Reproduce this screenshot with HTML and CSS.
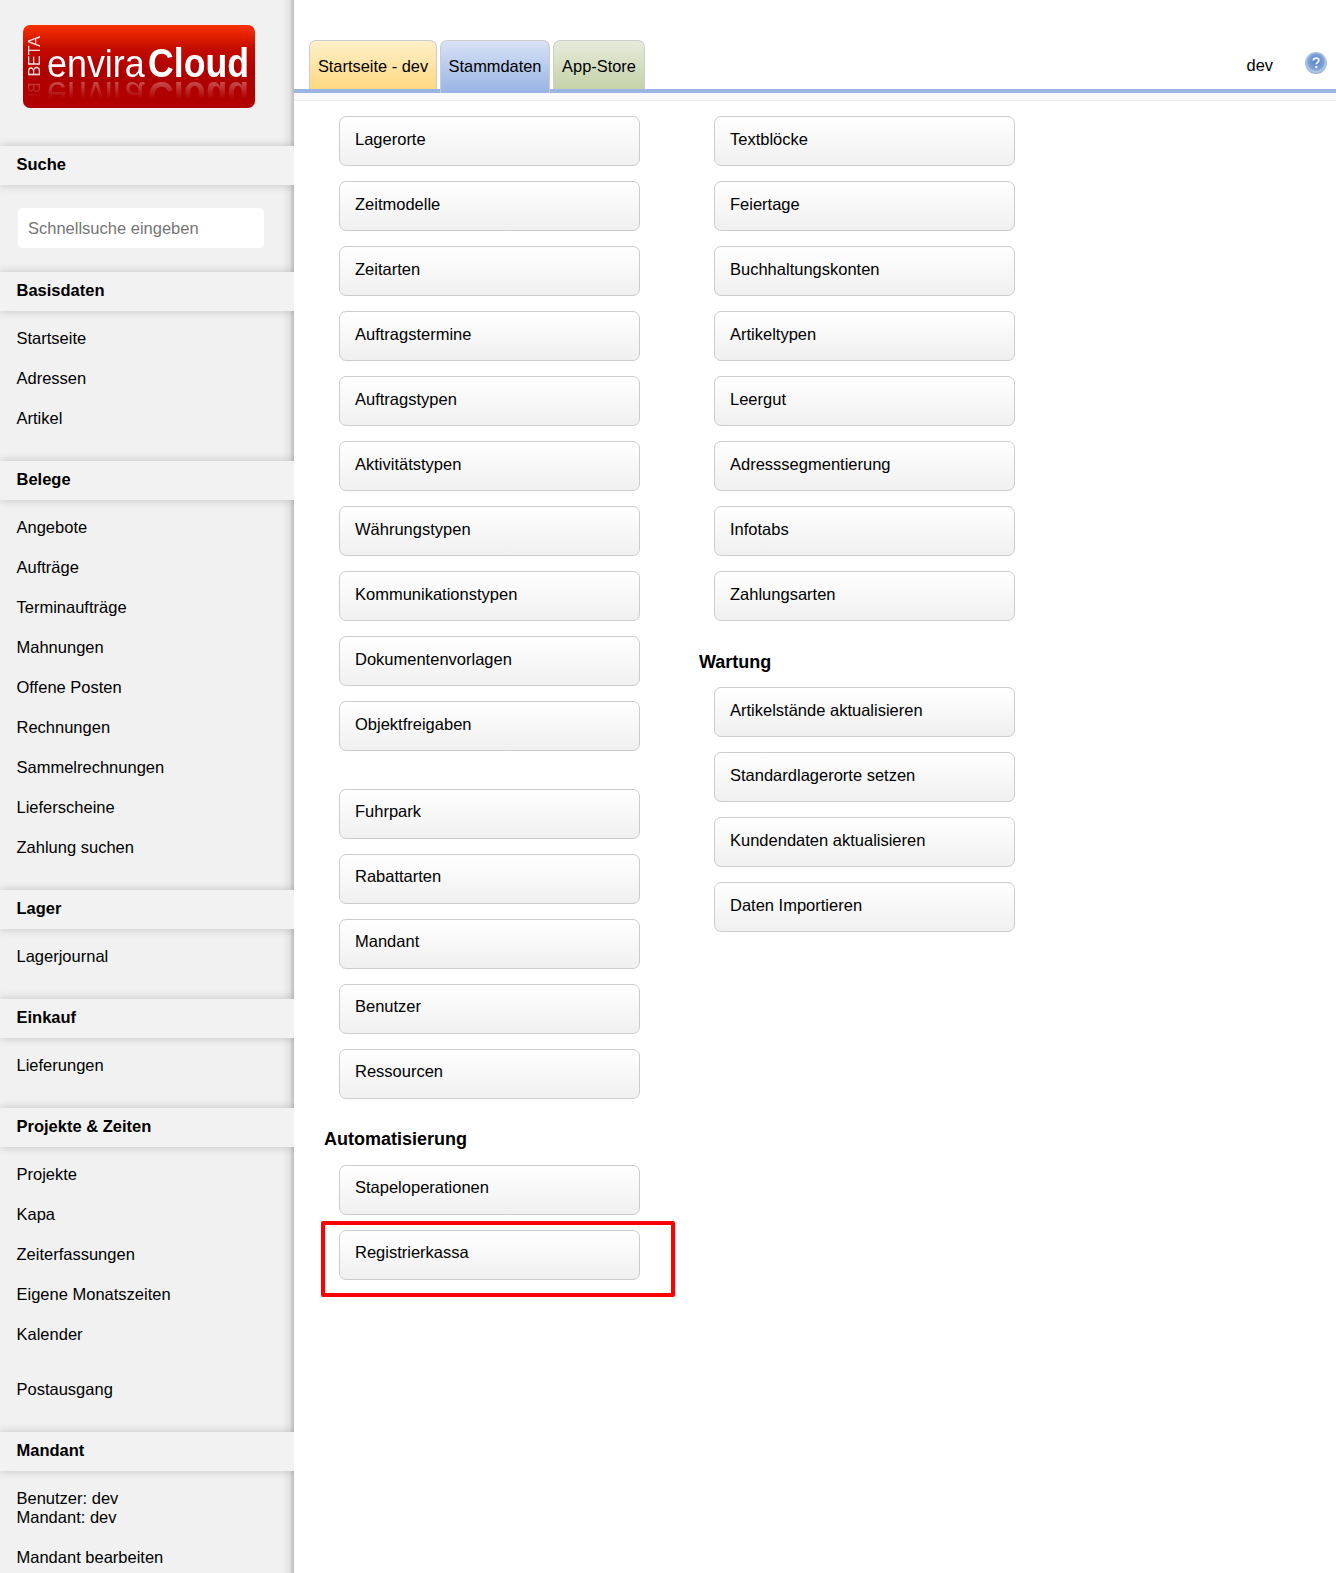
FILE: index.html
```html
<!DOCTYPE html>
<html lang="de">
<head>
    <meta charset="UTF-8">
    <meta name="viewport" content="width=device-width, initial-scale=1.0">
    <title>enviraCloud - Stammdaten</title>
    <link rel="stylesheet" href="styles.css">
</head>
<body>

    <div class="page">
        <aside class="sidebar">
            <div class="logo-area">
                <div class="logo">
                    <div class="logo-row">
                        <span class="logo-beta">BETA</span>
                        <span class="logo-envira">envira</span>
                        <span class="logo-cloud">Cloud</span>
                    </div>
                </div>
            </div>

            <h2 class="side-title">Suche</h2>
            <div class="search-box">
                <input type="text" class="search-input" placeholder="Schnellsuche eingeben">
            </div>

            <h2 class="side-title">Basisdaten</h2>
            <ul class="side-list">
                <li>Startseite</li>
                <li>Adressen</li>
                <li>Artikel</li>
            </ul>

            <h2 class="side-title">Belege</h2>
            <ul class="side-list">
                <li>Angebote</li>
                <li>Aufträge</li>
                <li>Terminaufträge</li>
                <li>Mahnungen</li>
                <li>Offene Posten</li>
                <li>Rechnungen</li>
                <li>Sammelrechnungen</li>
                <li>Lieferscheine</li>
                <li>Zahlung suchen</li>
            </ul>

            <h2 class="side-title">Lager</h2>
            <ul class="side-list">
                <li>Lagerjournal</li>
            </ul>

            <h2 class="side-title">Einkauf</h2>
            <ul class="side-list">
                <li>Lieferungen</li>
            </ul>

            <h2 class="side-title">Projekte &amp; Zeiten</h2>
            <ul class="side-list">
                <li>Projekte</li>
                <li>Kapa</li>
                <li>Zeiterfassungen</li>
                <li>Eigene Monatszeiten</li>
                <li>Kalender</li>
                <li class="side-gap">Postausgang</li>
            </ul>

            <h2 class="side-title">Mandant</h2>
            <ul class="side-list">
                <li class="side-info">Benutzer: dev<br>Mandant: dev</li>
                <li>Mandant bearbeiten</li>
            </ul>
        </aside>

        <main class="content">
            <header class="topbar">
                <nav class="tabs">
                    <a class="tab tab-home">Startseite - dev</a>
                    <a class="tab tab-master">Stammdaten</a>
                    <a class="tab tab-store">App-Store</a>
                </nav>
                <span class="user-name">dev</span>
                <svg class="help-icon" width="24" height="24" viewBox="0 0 24 24">
                    <defs>
                        <radialGradient id="helpFill" cx="50%" cy="45%" r="55%">
                            <stop offset="0%" stop-color="#5f88c8"/>
                            <stop offset="62%" stop-color="#7b9fd6"/>
                            <stop offset="82%" stop-color="#b4c9e8"/>
                            <stop offset="100%" stop-color="#8eaad6"/>
                        </radialGradient>
                    </defs>
                    <circle cx="12" cy="12" r="11" fill="url(#helpFill)"/>
                    <path d="M9.300 9.500c.2-1.500 1.300-2.300 2.800-2.300 1.600 0 2.700.9 2.700 2.200 0 1.200-.7 1.700-1.400 2.200-.7.500-1.100.9-1.100 1.700" fill="none" stroke="#eef3fb" stroke-width="1.800"/>
                    <circle cx="12.300" cy="16" r="1.200" fill="#eef3fb"/>
                </svg>
            </header>

            <div class="columns">
                <section class="column">
                    <a class="tile">Lagerorte</a>
                    <a class="tile">Zeitmodelle</a>
                    <a class="tile">Zeitarten</a>
                    <a class="tile">Auftragstermine</a>
                    <a class="tile">Auftragstypen</a>
                    <a class="tile">Aktivitätstypen</a>
                    <a class="tile">Währungstypen</a>
                    <a class="tile">Kommunikationstypen</a>
                    <a class="tile">Dokumentenvorlagen</a>
                    <a class="tile">Objektfreigaben</a>
                    <div class="spacer"></div>
                    <a class="tile tile-high">Fuhrpark</a>
                    <a class="tile tile-high">Rabattarten</a>
                    <a class="tile tile-high">Mandant</a>
                    <a class="tile tile-high">Benutzer</a>
                    <a class="tile tile-high">Ressourcen</a>
                    <h3 class="group-title">Automatisierung</h3>
                    <a class="tile tile-high">Stapeloperationen</a>
                    <div class="marked">
                        <a class="tile tile-high">Registrierkassa</a>
                        <div class="marker"></div>
                    </div>
                </section>

                <section class="column">
                    <a class="tile">Textblöcke</a>
                    <a class="tile">Feiertage</a>
                    <a class="tile">Buchhaltungskonten</a>
                    <a class="tile">Artikeltypen</a>
                    <a class="tile">Leergut</a>
                    <a class="tile">Adresssegmentierung</a>
                    <a class="tile">Infotabs</a>
                    <a class="tile">Zahlungsarten</a>
                    <h3 class="group-title group-title-low">Wartung</h3>
                    <a class="tile">Artikelstände aktualisieren</a>
                    <a class="tile">Standardlagerorte setzen</a>
                    <a class="tile">Kundendaten aktualisieren</a>
                    <a class="tile">Daten Importieren</a>
                </section>
            </div>
        </main>
    </div>

</body>
</html>
```

FILE: styles.css
```css
* {
    box-sizing: border-box;
}
html, body {
    margin: 0;
    padding: 0;
}
body {
    font-family: "Liberation Sans", Arial, sans-serif;
    font-size: 16.5px;
    color: #000;
    background-color: #fff;
}
.page {
    display: flex;
    height: 1573px;
    overflow: hidden;
}

/* Sidebar */
.sidebar {
    position: relative;
    flex: 0 0 294px;
    background-color: #f1f1f1;
    overflow: hidden;
}
.sidebar::after {
    content: "";
    position: absolute;
    top: 0;
    right: 0;
    bottom: 0;
    width: 12px;
    background: linear-gradient(to right, rgba(0, 0, 0, 0), rgba(0, 0, 0, 0.05) 60%, rgba(0, 0, 0, 0.22));
}
.logo-area {
    height: 146px;
    padding: 25px 0 0 23px;
}
.logo {
    width: 232px;
    height: 83px;
    padding-top: 11px;
    border-radius: 7px;
    overflow: hidden;
    color: #fff;
    background: linear-gradient(to bottom, #fa3200 0%, #c40c00 28%, #ae0000 55%, #b20000 100%);
}
.logo-row {
    display: flex;
    align-items: flex-end;
    height: 41px;
    padding-left: 5px;
    white-space: nowrap;
    -webkit-box-reflect: below 5px linear-gradient(to bottom, transparent 60%, rgba(255, 255, 255, 0.3) 100%);
}
.logo-beta {
    writing-mode: vertical-rl;
    transform: rotate(180deg);
    width: 14px;
    margin-right: 5px;
    font-size: 16px;
    line-height: 14px;
    opacity: 0.85;
}
.logo-envira {
    display: inline-block;
    width: 101px;
    font-size: 39px;
    line-height: 27px;
    transform: scaleX(0.92);
    transform-origin: left;
}
.logo-cloud {
    display: inline-block;
    font-size: 41.500px;
    line-height: 28px;
    font-weight: bold;
    transform: scaleX(0.86);
    transform-origin: left;
}
.side-title {
    position: relative;
    z-index: 1;
    height: 39px;
    margin: 0;
    padding-left: 16.500px;
    font-size: 16.500px;
    line-height: 37px;
    font-weight: bold;
    background-color: #f2f2f2;
    box-shadow: 0 0 9px rgba(0, 0, 0, 0.2);
}
.search-box {
    padding: 23px 30px 24px 18px;
}
.search-input {
    display: block;
    width: 100%;
    height: 40px;
    padding: 0 10px;
    border: none;
    border-radius: 5px;
    font-family: inherit;
    font-size: 16.500px;
    background-color: #fff;
}
.search-input::placeholder {
    color: #757575;
    opacity: 1;
}
.side-list {
    margin: 0;
    padding: 7px 0 23px 16.500px;
    list-style: none;
}
.side-list li {
    height: 40px;
    line-height: 40px;
}
.side-list .side-gap {
    margin-top: 15px;
}
.side-list .side-info {
    height: 59px;
    padding-top: 11px;
    line-height: 19px;
}

/* Top bar */
.content {
    flex: 1;
    min-width: 0;
}
.topbar {
    display: flex;
    height: 101px;
    padding: 40px 0 0 15px;
    background-color: #fff;
    background-image: linear-gradient(to bottom, #9ab4e4, #9ab4e4);
    background-repeat: no-repeat;
    background-size: 100% 4px;
    background-position: 0 89px;
    border-bottom: 1px solid #eee;
    box-shadow: inset 0 -7px 0 #f9f9f9;
}
.tabs {
    display: flex;
    gap: 3px;
}
.tab {
    display: block;
    height: 49px;
    border: 1px solid #ccc;
    border-bottom: none;
    border-radius: 7px 7px 0 0;
    font-size: 16.400px;
    line-height: 50px;
    text-align: center;
    white-space: nowrap;
}
.tab-home {
    width: 128px;
    background: linear-gradient(to bottom, #fff0c9, #ffd982);
}
.tab-master {
    width: 110px;
    height: 53px;
    background: linear-gradient(to bottom, #d8e2f6, #98b3e4);
}
.tab-store {
    width: 92px;
    background: linear-gradient(to bottom, #e6ebdb, #c5d2a9);
}
.user-name {
    margin-left: auto;
    font-size: 16.400px;
    line-height: 51px;
}
.help-icon {
    margin: 11px 8px 0 31px;
}

/* Main tiles */
.columns {
    display: flex;
    padding: 15px 0 0 30px;
}
.column {
    flex: 0 0 375px;
}
.tile {
    display: block;
    width: 301px;
    height: 50px;
    margin: 0 0 15px 15px;
    padding-left: 15px;
    border: 1px solid #ccc;
    border-radius: 7px;
    line-height: 44px;
    background: linear-gradient(to bottom, #fff, #f0f0f0);
}
.tile-high {
    line-height: 42px;
}
.spacer {
    height: 23px;
}
.group-title {
    height: 51px;
    margin: 0;
    padding-top: 14px;
    font-size: 18px;
    line-height: 22px;
    font-weight: bold;
}
.group-title-low {
    padding-top: 15px;
}
.marked {
    position: relative;
}
.marker {
    position: absolute;
    top: -9px;
    left: -3px;
    width: 354px;
    height: 76px;
    border: 4px solid #f00;
    border-radius: 2px;
}
```
